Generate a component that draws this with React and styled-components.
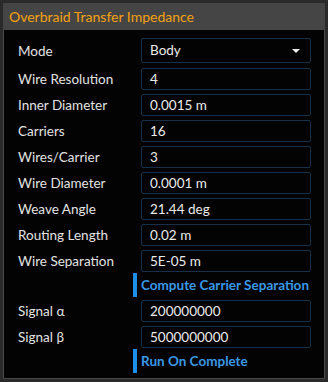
import styled, { createGlobalStyle } from "styled-components";

const GlobalStyle = createGlobalStyle`
  html, body {
    margin: 0;
    padding: 0;
    background: #2a2a2a;
    font-family: Lato, "Open Sans", sans-serif;
  }
`;

const fields = [
  { label: "Wire Resolution", value: "4" },
  { label: "Inner Diameter", value: "0.0015 m" },
  { label: "Carriers", value: "16" },
  { label: "Wires/Carrier", value: "3" },
  { label: "Wire Diameter", value: "0.0001 m" },
  { label: "Weave Angle", value: "21.44 deg" },
  { label: "Routing Length", value: "0.02 m" },
  { label: "Wire Separation", value: "5E-05 m" },
];

const signals = [
  { label: "Signal α", value: "200000000" },
  { label: "Signal β", value: "5000000000" },
];

const App = () => {
  return (
    <>
      <GlobalStyle />
      <Frame>
        <Panel>
          <Header>Overbraid Transfer Impedance</Header>
          <Body>
            <Row $spaced>
              <Label>Mode</Label>
              <Select>
                <span>Body</span>
                <Caret />
              </Select>
            </Row>
            {fields.map((f) => (
              <Row key={f.label}>
                <Label>{f.label}</Label>
                <Input>{f.value}</Input>
              </Row>
            ))}
            <ActionRow>
              <Action>Compute Carrier Separation</Action>
            </ActionRow>
            {signals.map((f) => (
              <Row key={f.label}>
                <Label>{f.label}</Label>
                <Input>{f.value}</Input>
              </Row>
            ))}
            <ActionRow>
              <Action>Run On Complete</Action>
            </ActionRow>
          </Body>
        </Panel>
      </Frame>
    </>
  );
};

export default App;

const Frame = styled.div`
  width: 328px;
  height: 382px;
  box-sizing: border-box;
  padding: 3px;
`;

const Panel = styled.div`
  width: 322px;
  height: 376px;
  box-sizing: border-box;
  border: 1px solid #474747;
  border-top: none;
  background: #030303;
  display: flex;
  flex-direction: column;
`;

const Header = styled.div`
  height: 27px;
  margin: 0 -1px;
  background: #454545;
  color: #f5a10f;
  font-size: 14px;
  line-height: 27px;
  padding-left: 6px;
`;

const Body = styled.div`
  padding: 8px 13px 0 13px;
  display: flex;
  flex-direction: column;
  gap: 4px;
`;

const Row = styled.div`
  display: grid;
  grid-template-columns: 124px 170px;
  align-items: center;
  margin-bottom: ${(p) => (p.$spaced ? "1px" : "0")};
`;

const ActionRow = styled.div`
  display: flex;
  padding-left: 116px;
  margin: -3px 0 -1px;
`;

const Label = styled.div`
  color: #e2e2e2;
  font-size: 13.5px;
  padding-left: 1px;
`;

const Input = styled.div`
  height: 22px;
  box-sizing: border-box;
  border: 1px solid #173049;
  border-radius: 2px;
  color: #ebebeb;
  font-size: 13.5px;
  line-height: 20px;
  padding-left: 8px;
`;

const Select = styled(Input)`
  height: 25px;
  line-height: 23px;
  display: flex;
  justify-content: space-between;
  align-items: center;
  padding-right: 10px;
`;

const Caret = styled.span`
  width: 0;
  height: 0;
  border-left: 4px solid transparent;
  border-right: 4px solid transparent;
  border-top: 4px solid #f0f0f0;
`;

const Action = styled.div`
  height: 24px;
  border-left: 4px solid #1d8fe8;
  padding-left: 4px;
  color: #3a98e6;
  font-size: 13.5px;
  font-weight: 700;
  line-height: 24px;
  white-space: nowrap;
`;
